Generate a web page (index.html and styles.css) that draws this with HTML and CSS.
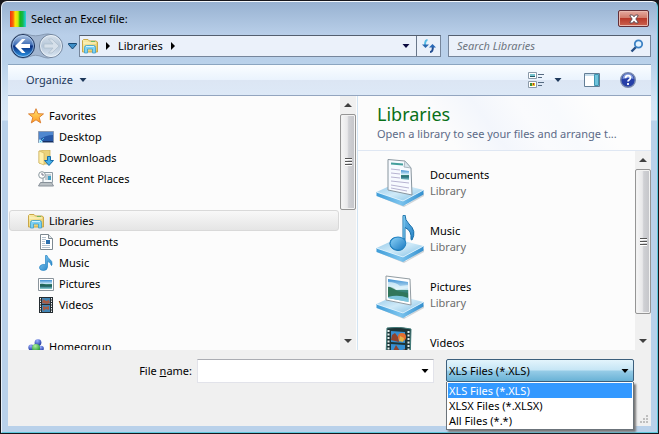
FILE: index.html
```html
<!DOCTYPE html>
<html lang="en">
<head>
<meta charset="utf-8">
<title>Select an Excel file:</title>
<link rel="stylesheet" href="styles.css">
</head>
<body>
<svg class="defs" aria-hidden="true">
  <defs>
    <linearGradient id="gold" x1="0" y1="0" x2="1" y2="1"><stop offset="0" stop-color="#fbf0ae"/><stop offset="1" stop-color="#e3c35c"/></linearGradient>
    <linearGradient id="blue" x1="0" y1="0" x2="1" y2="1"><stop offset="0" stop-color="#8fd4f8"/><stop offset="1" stop-color="#1878c0"/></linearGradient>
    <linearGradient id="top" x1="0" y1="0" x2="1" y2="1"><stop offset="0" stop-color="#8fc6e8"/><stop offset=".5" stop-color="#cfeaf8"/><stop offset="1" stop-color="#7cbde4"/></linearGradient>
    <linearGradient id="side" x1="0" y1="0" x2="1" y2="0"><stop offset="0" stop-color="#3e9cd8"/><stop offset=".5" stop-color="#7cc4ee"/><stop offset="1" stop-color="#338fce"/></linearGradient>
    <linearGradient id="sky" x1="0" y1="0" x2="0" y2="1"><stop offset="0" stop-color="#3d8fd2"/><stop offset=".45" stop-color="#d6effa"/><stop offset=".5" stop-color="#3c8878"/><stop offset=".7" stop-color="#2a7080"/><stop offset="1" stop-color="#8fd0d2"/></linearGradient>
    <linearGradient id="star" x1="0" y1="0" x2="0" y2="1"><stop offset="0" stop-color="#ffe670"/><stop offset="1" stop-color="#ff9a20"/></linearGradient>
    <linearGradient id="navblue" x1="0" y1="0" x2="0" y2="1"><stop offset="0" stop-color="#b5c9e6"/><stop offset=".45" stop-color="#3d6cb4"/><stop offset=".5" stop-color="#0a2e80"/><stop offset="1" stop-color="#2c9bea"/></linearGradient>
    <linearGradient id="navgray" x1="0" y1="0" x2="0" y2="1"><stop offset="0" stop-color="#d8e2ec"/><stop offset=".5" stop-color="#b5c6d8"/><stop offset="1" stop-color="#dce8f4"/></linearGradient>
    <linearGradient id="rainbow"><stop offset="0" stop-color="#ee3011"/><stop offset=".2" stop-color="#fb6a08"/><stop offset=".32" stop-color="#ffe408"/><stop offset=".5" stop-color="#c8ea10"/><stop offset=".62" stop-color="#18b818"/><stop offset=".8" stop-color="#14b850"/><stop offset="1" stop-color="#28d0e8"/></linearGradient>
    <radialGradient id="ball" cx=".4" cy=".25" r=".8"><stop offset="0" stop-color="#9bb0ff"/><stop offset="1" stop-color="#152f9a"/></radialGradient>
    <radialGradient id="green" cx=".4" cy=".25" r=".8"><stop offset="0" stop-color="#b0f0a0"/><stop offset="1" stop-color="#129028"/></radialGradient>
    <symbol id="folder" viewBox="0 0 16 16">
      <path d="M.5 14V2.500L1.500 1.500H6l1.500 1.500h6.500l1.500 1v10z" fill="url(#gold)" stroke="#c9a748"/>
      <path d="M1.500 5H14" stroke="#fff7cc"/><path d="M9 3.500h4" stroke="#6fb860"/>
      <path d="M2.500 15V9.500q0-2 2-2h7q2 0 2 2V15h-3v-4h-5v4z" fill="#7cd0f3" stroke="#3f9fca" stroke-width=".8"/>
      <path d="M4 8.500h8" stroke="#d3f3fd"/>
    </symbol>
    <symbol id="platform" viewBox="0 0 48 48">
      <path d="M1 37L28 48 48 37v-3L30 46z" fill="#7b8a94" opacity=".35"/>
      <path d="M.5 33L27 42 47.500 31v4.500L27 47 .5 37z" fill="url(#side)"/>
      <path d="M.5 33L20 24 47.500 31 27 42z" fill="url(#top)"/>
      <path d="M1 33.300L27 42 47 31.300" fill="none" stroke="#dff4ff" stroke-width=".8"/>
    </symbol>
  </defs>
</svg>
<main class="window">
  <header class="titlebar">
    <svg class="app-icon" viewBox="0 0 16 16" aria-hidden="true"><path d="M0 0h16v16H0z" fill="url(#rainbow)"/></svg>
    <h1>Select an Excel file:</h1>
    <button class="close" aria-label="Close"><svg viewBox="0 0 12 10"><path d="M2 1h2.500L6 2.800 7.500 1H10v1L7.800 5 10 8v1H7.500L6 7.200 4.500 9H2V8l2.200-3L2 2z" fill="#fff" stroke="#56454f" stroke-width=".9"/></svg></button>
  </header>

  <nav class="navbar">
    <div class="history">
      <svg class="history-shape" viewBox="0 0 56 28" aria-hidden="true"><path d="M14 1C19 1 22 3 27.500 3S36 1 41 1a13 13 0 0 1 0 26c-5 0-8-3-13.500-3S19 27 14 27A13 13 0 0 1 14 1z" fill="#a2b6d0" stroke="#8497b0"/></svg>
      <button aria-label="Back"><svg viewBox="0 0 26 26"><circle cx="13" cy="13" r="11.500" fill="url(#navblue)" stroke="#1b3057"/><circle cx="13" cy="13" r="10.500" fill="none" stroke="#b5d3f4" stroke-width=".7"/><path d="M5 13l7-7h3.500l-4.500 5H20v4h-9l4.500 5H12z" fill="#fff"/></svg></button>
      <button aria-label="Forward"><svg viewBox="0 0 26 26"><circle cx="13" cy="13" r="11.500" fill="url(#navgray)" stroke="#71849c"/><circle cx="13" cy="13" r="10.500" fill="none" stroke="#edf4fa" stroke-width=".8"/><path d="M21 13l-7-7h-3.500l4.500 5H6v4h9l-4.500 5H14z" fill="#d6e0ea" stroke="#aebdcc" stroke-width=".7"/></svg></button>
    </div>
    <button class="recent" aria-label="Recent locations"><svg viewBox="0 0 9 7"><path d="M.5.500h8v1L4.500 6 .5 1.500z" fill="#3e8fc8" stroke="#174873"/></svg></button>
    <div class="address">
      <svg class="i16" aria-hidden="true"><use href="#folder"/></svg>
      <svg class="chevron" viewBox="0 0 4 8" aria-hidden="true"><path d="M0 0l4 4-4 4z"/></svg>
      <a href="#libraries">Libraries</a>
      <svg class="chevron" viewBox="0 0 4 8" aria-hidden="true"><path d="M0 0l4 4-4 4z"/></svg>
      <button class="drop" aria-label="Previous locations"><svg class="arrow" viewBox="0 0 7 4"><path d="M0 0h7L3.500 4z" fill="#0b0b40"/></svg></button>
      <button class="refresh" aria-label="Refresh"><svg viewBox="0 0 14 14"><path d="M5.500 1Q3 1 3 6" stroke="#55bce6" stroke-width="2" fill="none"/><path d="M0 5.500h7L3.500 9z" fill="#2c68ae"/><path d="M8 13q3 0 2.800-5" stroke="#244e91" stroke-width="2" fill="none"/><path d="M7 8.500h7L10.500 5z" fill="#2968b6"/></svg></button>
    </div>
    <label class="search">
      <input type="search" placeholder="Search Libraries" aria-label="Search Libraries">
      <svg viewBox="0 0 14 14" aria-hidden="true"><path d="M1.500 12.500L6 8" stroke="#274f83" stroke-width="2.400"/><circle cx="8.500" cy="5" r="3.700" fill="#e3f3ff" stroke="#3d82c4" stroke-width="1.800"/></svg>
    </label>
  </nav>

  <div class="toolbar">
    <button class="organize">Organize <svg class="arrow" viewBox="0 0 7 4"><path d="M0 0h7L3.500 4z" fill="#1e395b"/></svg></button>
    <button class="view" aria-label="Change your view">
      <svg class="view-icon" viewBox="0 0 17 16"><path d="M.5.500h8v6h-8zM.5 9.500h8v6h-8z" fill="#fff" stroke="#8b9aa9"/><path d="M2 2h5v3H2z" fill="#76c4cf"/><path d="M2 4h5v1H2z" fill="#235a66"/><path d="M2 11h5v3H2z" fill="#e5c430"/><path d="M2 11h2v3H2z" fill="#3e8d3b"/><path d="M5 11h1v2H5z" fill="#b03232"/><path d="M10 2.500h6M10 5.500h4M10 10.500h6M10 13.500h4" stroke="#566b82"/></svg>
      <svg class="arrow" viewBox="0 0 7 4"><path d="M0 0h7L3.500 4z" fill="#1e395b"/></svg>
    </button>
    <button aria-label="Show the preview pane"><svg class="i16" viewBox="0 0 16 14"><path d="M.5.500h15v13H.5z" fill="#fff" stroke="#637e96"/><path d="M1 1h14v2H1z" fill="#c5ddec"/><path d="M10.500 1.500h4v11h-4z" fill="#6fc3dc" stroke="#3e95b0"/></svg></button>
    <button aria-label="Get help"><svg class="i16" viewBox="0 0 16 16"><circle cx="8" cy="8" r="7.300" fill="#263fa8" stroke="#7889ae" stroke-width="1.400"/><path d="M2.500 7a5.500 5.500 0 0 1 11 0q-5-2-11 0z" fill="#839cde"/><path d="M5.500 6.200Q5.500 3.700 8 3.700t2.500 2.100Q10.500 7 9 7.900q-1 .6-1 1.600M8 11v2" fill="none" stroke="#fff" stroke-width="1.800"/></svg></button>
  </div>

  <div class="panes">
    <aside class="sidebar">
      <ul class="tree">
        <li><a class="root" href="#favorites"><svg class="i16" viewBox="0 0 16 16"><path d="M8 .7l2 5 5.500.2-4.300 3.500 1.500 5.500L8 11.800l-4.700 3.100 1.500-5.500L.5 5.900 6 5.700z" fill="url(#star)" stroke="#d9792b" stroke-width=".9"/></svg>Favorites</a>
          <ul>
            <li><a href="#desktop"><svg class="i16" viewBox="0 0 16 16"><path d="M.5 2.500h15v11H.5z" fill="#2759a8" stroke="#8c9bb3"/><path d="M1 3h14v3Q7 6 1 11z" fill="#4f87cf"/><path d="M1 12h14v1H1z" fill="#153064"/><path d="M1 14v-3l1-1 3 3-1 1z" fill="#b9edff"/><path d="M2 13l4-4" stroke="#53b9e5"/></svg>Desktop</a></li>
            <li><a href="#downloads"><svg class="i16" viewBox="0 0 16 16"><path d="M1 1l7-1h4v14H5l-4-1z" fill="#ead27a" stroke="#cdb059" stroke-width=".8"/><path d="M1 1l5 2v12l-5-2z" fill="#fff0ad" stroke="#cdb059" stroke-width=".6"/><path d="M9.500 6.500h3v4h3L11 15.500l-4.500-5h3z" fill="#45afe9" stroke="#176ca9"/></svg>Downloads</a></li>
            <li><a href="#recent"><svg class="i16" viewBox="0 0 16 16"><path d="M5 1.500h9.500v10H5z" fill="#f4f8fa" stroke="#8e9ba4"/><path d="M7 4h6M7 6h3M7 8h3" stroke="#8c9ea9"/><path d="M10 5h3v4h-3z" fill="#429fc4"/><path d="M2.500 11.500h11l2 3.500H.5z" fill="#b9c0c4" stroke="#889199"/><circle cx="4" cy="4" r="3.300" fill="#fff" stroke="#8c989f"/><path d="M4 2v2h2" fill="none" stroke="#778"/></svg>Recent Places</a></li>
          </ul>
        </li>
        <li><a class="root selected" href="#libraries"><svg class="i16"><use href="#folder"/></svg>Libraries</a>
          <ul>
            <li><a href="#documents"><svg class="i16" viewBox="0 0 16 16"><path d="M2.500.500h8l4 4v11h-12z" fill="#fff" stroke="#7e8991"/><path d="M10.500.500v4h4" fill="#dfe5e9" stroke="#7e8991"/><path d="M4 3.500h4M4 5.500h4M4 7.500h3M4 9.500h3M4 11.500h8M4 13.500h8" stroke="#b3c1cd"/><path d="M8 6h4v4H8z" fill="#2b6fae"/></svg>Documents</a></li>
            <li><a href="#music"><svg class="i16" viewBox="0 0 16 16"><path d="M7.500.500h1.500q.5 2.500 3 4t2 5.500q-.5 1-1 0Q13 7 9.500 6.500V12q-.3 3.500-4 3.500t-4-2.500 3-3.500q1.500-.3 3 .3z" fill="url(#blue)" stroke="#2786c5" stroke-width=".7"/></svg>Music</a></li>
            <li><a href="#pictures"><svg class="i16" viewBox="0 0 16 16"><path d="M.5 2.500h15v12H.5z" fill="#fff" stroke="#8a949c"/><path d="M2 4h12v9H2z" fill="url(#sky)"/><path d="M2 8q3-1 6 1l6-.5v2H2z" fill="#256559"/></svg>Pictures</a></li>
            <li><a href="#videos"><svg class="i16" viewBox="0 0 16 16"><path d="M1 0h14v16H1z" fill="#252c31"/><path d="M4 1h8v6H4zM4 8h8v7H4z" fill="#4085b5"/><path d="M5 2l3 2 3-1 1 3-3 1-5-1zM5 9l3 1 3-1v4l-3-1-3 2z" fill="#a65b45"/><path d="M2.500 1v14M13.500 1v14" stroke="#e9eff0" stroke-dasharray="1.500 1"/></svg>Videos</a></li>
          </ul>
        </li>
        <li><a class="root" href="#homegroup"><svg class="i16" viewBox="0 0 16 16"><path d="M3 10L9 3l4 7-9 1z" fill="none" stroke="#9bb3d0" stroke-width="1.500"/><circle cx="3.300" cy="8.500" r="3" fill="url(#ball)"/><circle cx="10" cy="3.600" r="3.400" fill="url(#ball)"/><circle cx="13" cy="9.500" r="2.800" fill="url(#ball)"/><circle cx="8" cy="9" r="4" fill="url(#green)"/></svg>Homegroup</a></li>
      </ul>
      <div class="scrollbar nav-scroll" aria-hidden="true"><span class="up"></span><span class="thumb"></span><span class="track"></span><span class="down"></span></div>
    </aside>

    <section class="content">
      <header class="library-head">
        <h2>Libraries</h2>
        <p>Open a library to see your files and arrange t...</p>
      </header>
      <div class="library-body">
        <ul class="library-list">
          <li><a href="#documents"><svg viewBox="0 0 48 48"><use href="#platform"/><path d="M12 .5l17 1.500 6 7 1 27-24-5z" fill="#f7faff" stroke="#88959e"/><path d="M29 2l-1 6 7 1z" fill="#d9e5ed" stroke="#9aa8b0" stroke-width=".8"/><path d="M15 4.500l12 1" stroke="#439e9c" stroke-width="2"/><path d="M15 10l9 1M15 14l9 1M15 18l9 1M15 22l18 2M15 26l18 3M15 29l16 3" stroke="#b7b4d2"/><path d="M25 11l8 1v9l-8-1z" fill="url(#sky)"/></svg><span>Documents<small>Library</small></span></a></li>
          <li><a href="#music"><svg viewBox="0 0 48 48"><use href="#platform"/><path d="M27 .5l2-.5q0 5 4 9 8 7 3 16l-1-.5q1-9-6-12v15q0 8-7 8-8-1-8-7t7-6q4 0 6 3z" fill="url(#blue)" stroke="#176fa9"/><ellipse cx="22" cy="28.500" rx="7.800" ry="6.500" fill="url(#blue)" stroke="#2385c5"/><path d="M28 1v22" stroke="#84ceef"/></svg><span>Music<small>Library</small></span></a></li>
          <li><a href="#pictures"><svg viewBox="0 0 48 48"><use href="#platform"/><path d="M10 5l24 3 1 26-25-5z" fill="#fff" stroke="#929ca2"/><path d="M12 8l20 3 .5 20L12 27z" fill="url(#sky)"/><path d="M12 16q5-1 9 4 5 1 11 2v6q-10-3-20-2z" fill="#30765b"/><path d="M12 11q8 0 12 4l8-1v3l-12 2-8-4z" fill="#e8f8fc" opacity=".7"/><path d="M12 26q10-3 20.500 1v4L12 27z" fill="#7cc4dc"/></svg><span>Pictures<small>Library</small></span></a></li>
          <li><a href="#videos"><svg viewBox="0 0 48 48"><use href="#platform"/><path d="M11 1q12-2 24 1l-1 34-24-5z" fill="#1d3437" stroke="#427b79"/><path d="M15 4l14 1v11l-14-1zM15 17l14 1v12l-14-2z" fill="#368fd2"/><path d="M15 13l1-5 3-2 3 4 1 5zM16 26l4-8 4 6 5-2v7z" fill="#8f432d"/><circle cx="26" cy="10" r="4" fill="#e46f31"/><path d="M24 9l4 2-1 4-4-1z" fill="#e2b447"/><path d="M12.500 3v28M32.500 4v30" stroke="#e5f1ef" stroke-width="2" stroke-dasharray="2 1.500"/></svg><span>Videos<small>Library</small></span></a></li>
        </ul>
        <div class="scrollbar list-scroll" aria-hidden="true"><span class="up"></span><span class="thumb"></span><span class="track"></span><span class="down"></span></div>
      </div>
    </section>
  </div>

  <footer class="footer">
    <label for="filename">File <u>n</u>ame:</label>
    <div class="filename">
      <input id="filename" type="text">
      <button aria-label="Previous file names"><svg class="arrow" viewBox="0 0 7 4"><path d="M0 0h7L3.500 4z"/></svg></button>
    </div>
    <div class="filetype">
      <select aria-label="File type"><option>XLS Files (*.XLS)</option><option>XLSX Files (*.XLSX)</option><option>All Files (*.*)</option></select>
      <svg class="arrow" viewBox="0 0 7 4" aria-hidden="true"><path d="M0 0h7L3.500 4z"/></svg>
      <ul class="menu" role="listbox" aria-label="File type">
        <li role="option" aria-selected="true">XLS Files (*.XLS)</li>
        <li role="option" aria-selected="false">XLSX Files (*.XLSX)</li>
        <li role="option" aria-selected="false">All Files (*.*)</li>
      </ul>
    </div>
    <svg class="grip" viewBox="0 0 9 9" aria-hidden="true"><path d="M6 0h2v2H6zM3 3h2v2H3zM6 3h2v2H6zM0 6h2v2H0zM3 6h2v2H3zM6 6h2v2H6z" fill="#bfbfbf"/></svg>
  </footer>
</main>
</body>
</html>
```
FILE: styles.css
```css
* { box-sizing: border-box; }

body {
  margin: 0;
  height: 100vh;
  padding: 1px;
  overflow: hidden;
  background: #17171c;
  color: #000;
  font: 11px/16px "Noto Sans", "Open Sans", sans-serif;
}

h1, h2, p, ul { margin: 0; padding: 0; font: inherit; }
ul { list-style: none; }
a { color: inherit; text-decoration: none; }
svg { display: block; flex: none; }
button {
  display: flex;
  align-items: center;
  justify-content: center;
  margin: 0;
  padding: 0;
  border: 0;
  background: none;
  color: inherit;
  font: inherit;
}
input, select { font: inherit; color: inherit; outline: 0; }

.defs { position: absolute; width: 0; height: 0; }
.i16 { width: 16px; height: 16px; }
.arrow { width: 8px; height: 4px; }

.window {
  display: flex;
  flex-direction: column;
  height: 100%;
  padding: 0 6px 6px;
  border: 1px solid #5fc8dd;
  border-top-color: #f4f8fc;
  border-left-color: #e8f1fa;
  border-radius: 6px 6px 0 0;
  background: linear-gradient(#98b2d1, #b9cfe9 33px, #b9d1ea 60px, #d5e5f5 100px, #d9e8f7 118px, #b9d1ea 119px);
}

/* Title and navigation */
.titlebar {
  display: flex;
  align-items: center;
  gap: 5px;
  height: 33px;
  padding: 0 2px;
}
.app-icon { width: 16px; height: 16px; }
.titlebar h1 { flex: 1; }
.close {
  width: 31px;
  height: 17px;
  border: 1px solid #632f38;
  border-radius: 2px;
  background: linear-gradient(#e5aaa0, #d27c6c 45%, #b8392a 50%, #cc6350);
  box-shadow: inset 0 0 0 1px #e9b8ae;
}
.close svg { width: 12px; height: 10px; }

.navbar {
  display: flex;
  align-items: center;
  height: 22px;
}
.history { position: relative; display: flex; gap: 2px; padding: 0 2px; }
.history-shape { position: absolute; inset: 0 auto auto 0; width: 56px; height: 26px; }
.history button { position: relative; width: 26px; height: 26px; }
.history button svg { width: 26px; height: 26px; }
.recent { width: 12px; height: 20px; }
.recent svg { width: 9px; height: 7px; }
.address {
  display: flex;
  flex: 1;
  align-items: center;
  height: 22px;
  margin: 0 7px 0 1px;
  padding-left: 2px;
  border: 1px solid #76869b;
  border-top-color: #545f6f;
  background: #ebf1fa;
}
.chevron { width: 4px; height: 8px; margin: 0 8px; }
.drop { width: 20px; height: 20px; margin-left: auto; }
.refresh { width: 24px; height: 20px; border-left: 1px solid #69778a; }
.refresh svg { width: 14px; height: 14px; }
.search {
  display: flex;
  align-items: center;
  width: 32%;
  max-width: 203px;
  height: 22px;
  padding: 0 6px 0 8px;
  border: 1px solid #76869b;
  border-top-color: #545f6f;
  background: #ebf1fa;
}
.search input { flex: 1; min-width: 0; padding: 0; border: 0; background: none; }
.search input::placeholder { color: #6c747e; font-style: italic; opacity: 1; }
.search svg { width: 14px; height: 14px; }

.toolbar {
  display: flex;
  align-items: center;
  height: 32px;
  margin-top: 7px;
  padding: 0 15px 0 18px;
  border-top: 1px solid #8ba5c0;
  border-bottom: 1px solid #93a5bf;
  background: linear-gradient(#fafdff, #eaf3fd 50%, #dce6f4 51%, #dde9f7);
  color: #1e395b;
}
.organize { gap: 6px; margin-right: auto; }
.view { gap: 9px; margin-right: 22px; }
.view-icon { width: 17px; height: 16px; }
.view + button { margin-right: 20px; }

/* Panes */
.panes {
  display: flex;
  flex: 1;
  min-height: 0;
  overflow: hidden;
  background: #fcfcfc;
}
.sidebar { display: flex; width: 350px; min-height: 0; flex: none; border-right: 1px solid #d3e4f2; }
.tree { flex: 1; padding: 9px 1px 0 1px; }
.tree > li { margin-bottom: 21px; }
.tree a {
  display: flex;
  align-items: center;
  gap: 5px;
  height: 21px;
  padding-left: 28px;
  border: 1px solid transparent;
  border-radius: 3px;
}
.tree a.root { padding-left: 18px; }
.tree a.selected {
  border-color: #d9d9d9;
  background: linear-gradient(#f8f8f8, #e5e5e5);
}

.scrollbar {
  display: flex;
  flex: none;
  flex-direction: column;
  width: 16px;
  background: #f0f0f0;
}
.up, .down { display: grid; place-items: center; height: 18px; flex: none; }
.up::before, .down::before {
  content: "";
  border: 4px solid transparent;
  border-top: 0;
  border-bottom: 4px solid #404040;
}
.down::before { border-bottom: 0; border-top: 4px solid #404040; }
.thumb {
  display: grid;
  place-items: center;
  border: 1px solid #959595;
  border-radius: 2px;
  background: linear-gradient(90deg, #f6f6f6, #e8e8ea 45%, #cfd0d4 55%, #c4c5c9);
  box-shadow: inset 0 0 0 1px #f2f2f2;
}
.thumb::before {
  content: "";
  width: 7px;
  height: 8px;
  background: repeating-linear-gradient(#555 0 1px, #fff 1px 2px, transparent 2px 3px);
}
.nav-scroll { margin-right: 1px; }
.nav-scroll .thumb { flex: 95; }
.nav-scroll .track { flex: 123; }
.list-scroll .thumb { flex: 145; }
.list-scroll .track { flex: 18; }

.content { display: flex; flex: 1; flex-direction: column; min-width: 0; }
.library-head {
  flex: none;
  padding: 6px 0 8px 19px;
  background: linear-gradient(55deg, #fcfcfc 30%, #f3f6fc 45%, #fafbfd 58%, #f8fafd 68%, #fdfdfd 80%);
  border-bottom: 1px solid #dfe7f3;
  white-space: nowrap;
}
.library-head h2 { color: #087018; font-size: 18px; line-height: 24px; }
.library-head p { color: #5c6a87; }
.library-body { display: flex; flex: 1; min-height: 0; overflow: hidden; }
.library-list { flex: 1; padding: 8px 0 0 18px; }
.library-list li { height: 56px; }
.library-list a { display: flex; gap: 6px; }
.library-list svg { width: 48px; height: 48px; }
.library-list span { padding-top: 8px; }
.library-list small { display: block; color: #6d6d6d; font-size: 11px; }

/* File name and type */
.footer {
  position: relative;
  display: flex;
  align-items: flex-start;
  flex: none;
  height: 76px;
  padding: 9px 17px 0 130px;
  background: #f0f0f0;
}
.footer > label { width: 59px; padding-right: 5px; line-height: 24px; text-align: right; white-space: nowrap; }
.filename {
  display: flex;
  flex: 1;
  height: 24px;
  margin-right: 12px;
  border: 1px solid #e2e3ea;
  border-top-color: #abadb3;
  background: #fff;
}
.filename input { flex: 1; min-width: 0; border: 0; background: none; }
.filename button { width: 17px; }
.filetype { position: relative; width: 188px; height: 23px; }
.filetype select {
  width: 100%;
  height: 23px;
  padding: 0 2px;
  appearance: none;
  border: 1px solid #3c5f7c;
  border-radius: 2px;
  background: linear-gradient(#e3f4fc, #c5e5f5 48%, #96cce7 52%, #69b2d6);
}
.filetype .arrow { position: absolute; top: 10px; right: 5px; }
.menu {
  position: absolute;
  top: 23px;
  left: 0;
  width: 100%;
  padding: 1px;
  border: 1px solid #6b737a;
  border-top: 0;
  background: #fff;
  box-shadow: 2px 2px 2px #777;
}
.menu li { height: 15px; padding-left: 1px; line-height: 15px; }
.menu li[aria-selected="true"] { background: #3399ff; color: #fff; }
.grip { position: absolute; right: 2px; bottom: 2px; width: 9px; height: 9px; }
```
